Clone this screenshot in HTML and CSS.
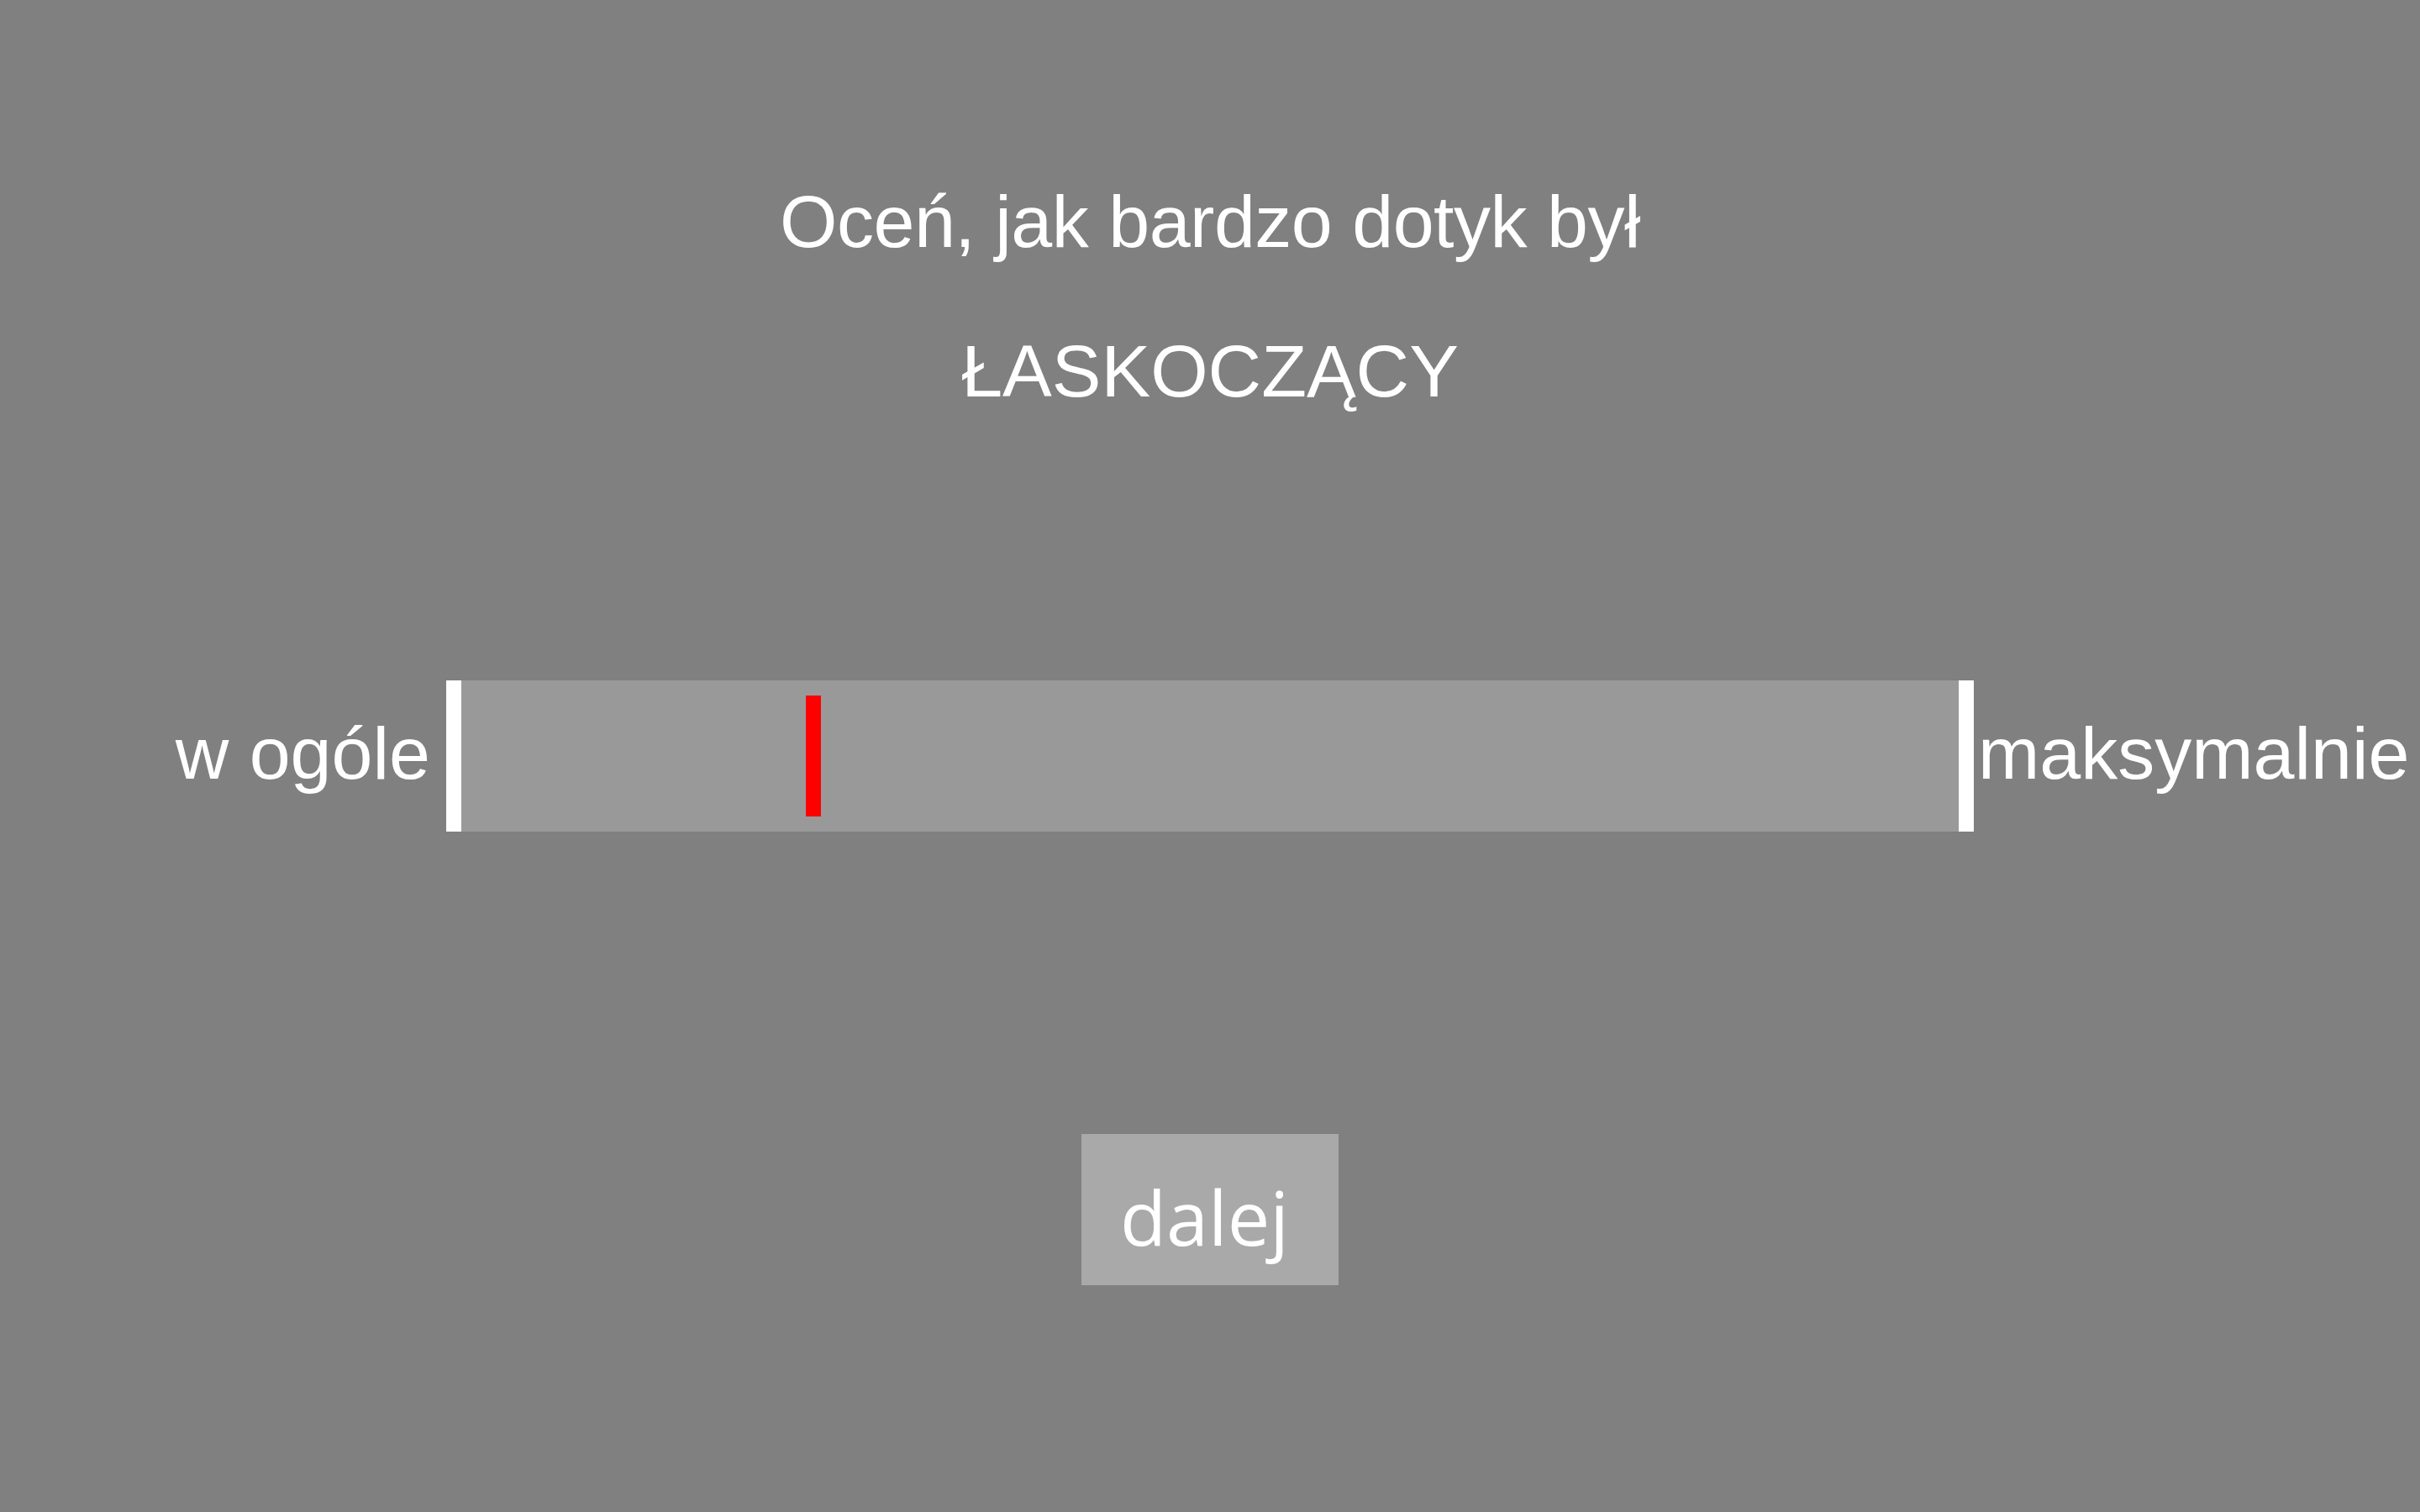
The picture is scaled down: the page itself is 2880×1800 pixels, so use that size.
FILE: index.html
```html
<!DOCTYPE html>
<html lang="pl">
<head>
<meta charset="utf-8">
<title>Ocena dotyku</title>
<link rel="stylesheet" href="styles.css">
</head>
<body>
<main class="screen">
  <header class="prompt">
    <p class="prompt-line prompt-question">Oceń, jak bardzo dotyk był</p>
    <p class="prompt-line">ŁASKOCZĄCY</p>
  </header>
  <section class="scale-row">
    <span class="scale-label scale-label-left">w ogóle</span>
    <div class="scale-bar">
      <span class="scale-marker" style="margin-left: 410px;"></span>
    </div>
    <span class="scale-label scale-label-right">maksymalnie</span>
  </section>
  <div class="actions">
    <button class="next-btn" type="button">dalej</button>
  </div>
</main>
</body>
</html>
```

FILE: styles.css
```css
html, body {
  margin: 0;
  padding: 0;
}

body {
  background: #808080;
  width: 2880px;
  height: 1800px;
  overflow: hidden;
  color: #ffffff;
  font-family: "Liberation Sans", Arial, sans-serif;
}

.screen {
  display: flex;
  flex-direction: column;
  align-items: stretch;
  padding-top: 214px;
}

.prompt {
  display: flex;
  flex-direction: column;
  align-items: center;
  gap: 78px;
}

.prompt-line {
  margin: 0;
  font-size: 88px;
  line-height: 100px;
  text-align: center;
  white-space: nowrap;
}

.prompt-question {
  letter-spacing: -0.5px;
}

.scale-row {
  margin-top: 318px;
  display: grid;
  grid-template-columns: 1fr 1818px 1fr;
  align-items: start;
}

.scale-label {
  font-size: 88px;
  line-height: 100px;
  padding-top: 37px;
  white-space: nowrap;
}

.scale-label-left {
  text-align: right;
  padding-right: 19px;
}

.scale-label-right {
  text-align: left;
  padding-left: 5px;
}

.scale-bar {
  box-sizing: border-box;
  height: 180px;
  background: #999999;
  border-left: 18px solid #ffffff;
  border-right: 18px solid #ffffff;
  display: flex;
  align-items: center;
}

.scale-marker {
  display: block;
  width: 18px;
  height: 144px;
  background: #ff0000;
}

.actions {
  margin-top: 360px;
  display: flex;
  justify-content: center;
}

.next-btn {
  box-sizing: border-box;
  width: 306px;
  height: 180px;
  margin: 0;
  border: none;
  background: #a9a9a9;
  color: #ffffff;
  font-family: "Open Sans", sans-serif;
  font-size: 90px;
  line-height: 125px;
  text-align: left;
  padding: 16px 0 0 46px;
  display: flex;
  align-items: center;
}
```
